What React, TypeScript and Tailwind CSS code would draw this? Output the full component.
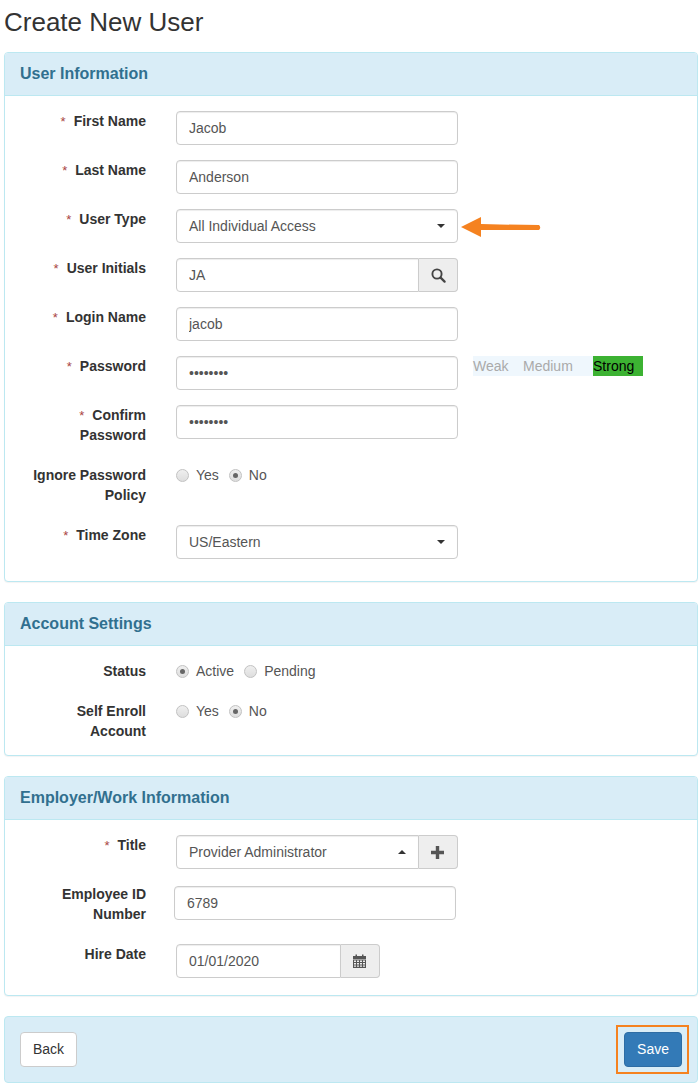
import type { ReactNode } from 'react';

const inputClass =
  'h-[34px] w-full rounded-[4px] border border-[#ccc] bg-white px-3 text-[14px] text-[#555] outline-none shadow-[inset_0_1px_1px_rgba(0,0,0,0.075)]';

const Panel = ({ title, children }: { title: string; children: ReactNode }) => (
  <section className="mb-5 rounded-[4px] border border-[#bce8f1] bg-white shadow-[0_1px_1px_rgba(0,0,0,0.05)]">
    <h2 className="flex h-[43px] items-center rounded-t-[3px] border-b border-[#bce8f1] bg-[#d9edf7] pl-[15px] text-[16px] font-bold text-[#31708f]">
      {title}
    </h2>
    <div className="pt-[15px]">{children}</div>
  </section>
);

const Row = ({
  label,
  required,
  className = 'mb-[15px]',
  children,
}: {
  label: string;
  required?: boolean;
  className?: string;
  children: ReactNode;
}) => (
  <div className={`flex items-start ${className}`}>
    <label className="ml-[21px] w-[120px] text-right text-[14px] font-bold leading-5 text-[#333]">
      {required && <span className="mr-2 text-[13px] leading-none font-normal text-[#a94442]">*</span>}
      {label}
    </label>
    <div className="ml-[30px] w-[282px]">{children}</div>
  </div>
);

const SelectBox = ({ value, up }: { value: string; up?: boolean }) => (
  <div className={`${inputClass} flex items-center justify-between`}>
    <span>{value}</span>
    <span
      className={`h-0 w-0 border-x-4 border-x-transparent ${
        up ? 'border-b-4 border-b-[#333]' : 'border-t-4 border-t-[#333]'
      }`}
    />
  </div>
);

const Radio = ({ checked, label }: { checked?: boolean; label: string }) => (
  <span className="mr-[10px] flex items-center">
    <span className="flex h-[13px] w-[13px] items-center justify-center rounded-full border border-[#c2c2c2] bg-gradient-to-b from-[#efefef] to-[#dedede]">
      {checked && <span className="h-[5px] w-[5px] rounded-full bg-[#666]" />}
    </span>
    <span className="ml-[7px] text-[14px] leading-5 text-[#555]">{label}</span>
  </span>
);

const Addon = ({ children }: { children: ReactNode }) => (
  <span className="flex h-[34px] w-[39px] shrink-0 items-center justify-center rounded-r-[4px] border border-l-0 border-[#ccc] bg-[#eee] text-[#555]">
    {children}
  </span>
);

const SearchIcon = () => (
  <svg width="15" height="15" viewBox="0 0 15 15" fill="none">
    <circle cx="6" cy="6" r="4.6" stroke="#444" strokeWidth="1.9" />
    <path d="M9.6 9.6 L13.6 13.6" stroke="#444" strokeWidth="2.2" strokeLinecap="round" />
  </svg>
);

const PlusIcon = () => (
  <svg className="-ml-[2px]" width="13" height="13" viewBox="0 0 13 13" fill="#555">
    <path d="M4.8 0 H8.2 V4.8 H13 V8.2 H8.2 V13 H4.8 V8.2 H0 V4.8 H4.8 Z" />
  </svg>
);

const CalendarIcon = () => (
  <svg className="-ml-[2px]" width="13" height="14" viewBox="0 0 13 14" fill="#555">
    <path d="M0 2 H2.5 V0.5 H4 V2 H9 V0.5 H10.5 V2 H13 V5 H0 Z" />
    <path
      fillRule="evenodd"
      d="M0 5.6 H13 V14 H0 Z M1 6.6 V8 H3 V6.6 Z M4 6.6 V8 H6 V6.6 Z M7 6.6 V8 H9 V6.6 Z M10 6.6 V8 H12 V6.6 Z M1 9 V10.4 H3 V9 Z M4 9 V10.4 H6 V9 Z M7 9 V10.4 H9 V9 Z M10 9 V10.4 H12 V9 Z M1 11.4 V12.8 H3 V11.4 Z M4 11.4 V12.8 H6 V11.4 Z M7 11.4 V12.8 H9 V11.4 Z M10 11.4 V12.8 H12 V11.4 Z"
    />
  </svg>
);

export default function App() {
  return (
    <div className="relative h-[1087px] w-[700px] overflow-hidden bg-white pr-[2px] pl-1 font-['Liberation_Sans',Arial,sans-serif] text-[14px] text-[#333]">
      <h1 className="flex h-[52px] items-start pt-[6px] text-[26px] leading-[32px] font-normal text-[#333]">
        Create New User
      </h1>

      <Panel title="User Information">
        <Row label="First Name" required>
          <input className={inputClass} defaultValue="Jacob" />
        </Row>
        <Row label="Last Name" required>
          <input className={inputClass} defaultValue="Anderson" />
        </Row>
        <Row label="User Type" required>
          <SelectBox value="All Individual Access" />
        </Row>
        <Row label="User Initials" required>
          <div className="flex">
            <input className={`${inputClass} rounded-r-none`} defaultValue="JA" />
            <Addon>
              <SearchIcon />
            </Addon>
          </div>
        </Row>
        <Row label="Login Name" required>
          <input className={inputClass} defaultValue="jacob" />
        </Row>
        <Row label="Password" required>
          <div className="relative">
            <input type="password" className={inputClass} defaultValue="password" />
            <div className="absolute top-0 left-[297px] flex h-5 w-[170px] bg-[#eff7fd] text-[14px] leading-5 text-[#aaa]">
              <span className="w-[50px]">Weak</span>
              <span className="w-[70px]">Medium</span>
              <span className="w-[50px] bg-[#3cb232] text-black">Strong</span>
            </div>
          </div>
        </Row>
        <Row label="Confirm Password" required className="mb-5">
          <input type="password" className={inputClass} defaultValue="password" />
        </Row>
        <Row label="Ignore Password Policy" className="mb-5">
          <div className="flex">
            <Radio label="Yes" />
            <Radio label="No" checked />
          </div>
        </Row>
        <Row label="Time Zone" required className="mb-[22px]">
          <SelectBox value="US/Eastern" />
        </Row>
      </Panel>

      <Panel title="Account Settings">
        <Row label="Status" className="mb-5">
          <div className="flex">
            <Radio label="Active" checked />
            <Radio label="Pending" />
          </div>
        </Row>
        <Row label="Self Enroll Account" className="mb-[14px]">
          <div className="flex">
            <Radio label="Yes" />
            <Radio label="No" checked />
          </div>
        </Row>
      </Panel>

      <Panel title="Employer/Work Information">
        <Row label="Title" required>
          <div className="flex">
            <div className="min-w-0 flex-1 [&>div]:rounded-r-none">
              <SelectBox value="Provider Administrator" up />
            </div>
            <Addon>
              <PlusIcon />
            </Addon>
          </div>
        </Row>
        <Row label="Employee ID Number" className="mb-5">
          <input className={`${inputClass} mt-[2px] -ml-[2px]`} defaultValue="6789" />
        </Row>
        <Row label="Hire Date" className="mb-[17px]">
          <div className="flex w-[204px]">
            <input className={`${inputClass} rounded-r-none`} defaultValue="01/01/2020" />
            <Addon>
              <CalendarIcon />
            </Addon>
          </div>
        </Row>
      </Panel>

      <div className="flex h-[67px] items-center justify-between rounded-[4px] border border-[#bce8f1] bg-[#d9edf7] px-[15px]">
        <button className="h-[35px] rounded-[4px] border border-[#ccc] bg-white px-3 text-[14px] text-[#333]">
          Back
        </button>
        <button className="h-[35px] rounded-[4px] border border-[#2e6da4] bg-[#337ab7] px-3 text-[14px] text-white">
          Save
        </button>
      </div>

      {/* annotations drawn on top of the screenshot */}
      <svg className="absolute top-[216px] left-[460px]" width="82" height="22" viewBox="0 0 82 22" fill="none">
        <path d="M1 11 L21 1 L21 8 L40 8.5 L79 9 Q81.5 11.5 79 14 L40 14 L21 14 L21 21 Z" fill="#f58220" />
      </svg>
      <div className="absolute top-[1025px] left-[616px] h-[49px] w-[73px] border-2 border-[#f58220]" />
    </div>
  );
}
